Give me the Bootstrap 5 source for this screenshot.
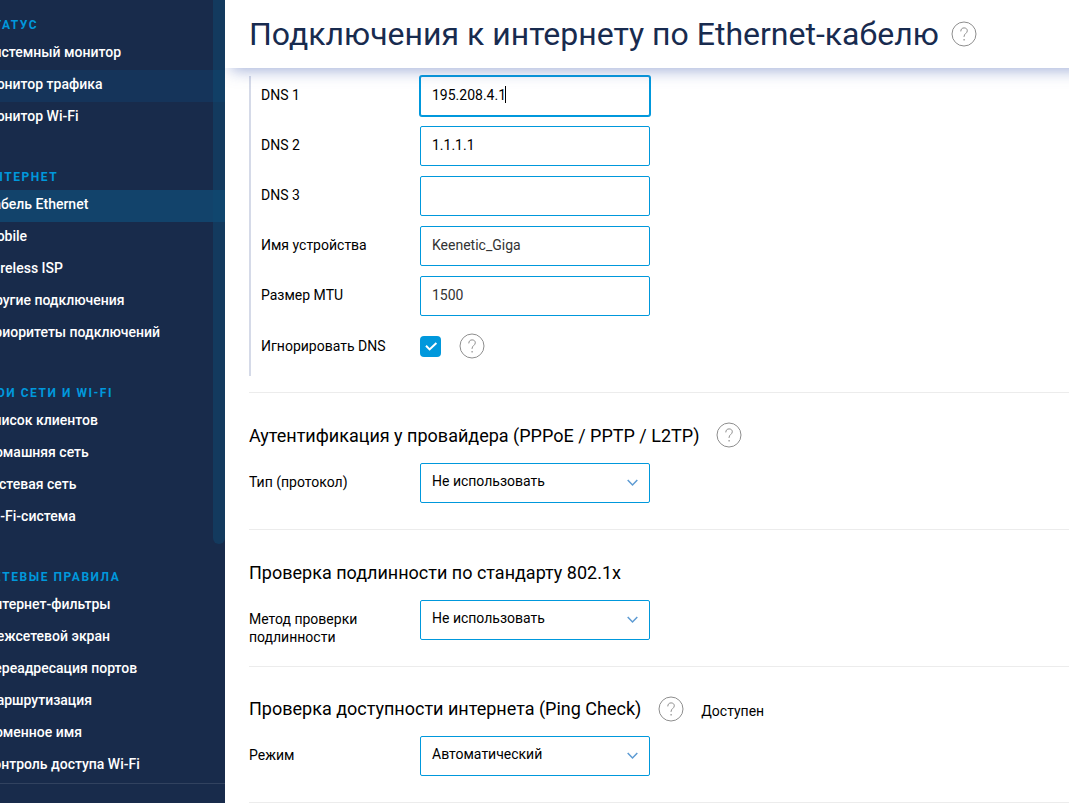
<!DOCTYPE html>
<html lang="ru">
<head>
<meta charset="utf-8">
<meta name="viewport" content="width=device-width, initial-scale=1">
<title>Подключения к интернету по Ethernet-кабелю</title>
<link href="https://cdn.jsdelivr.net/npm/bootstrap@5.3.0/dist/css/bootstrap.min.css" rel="stylesheet">
<style>
  body { font-family: Roboto, "Liberation Sans", sans-serif; font-size: 14px; line-height: 18px; color: #000; background: #fff; }
  .shell { height: 803px; }

  /* sidebar */
  .side { width: 225px; background: #182b4b; }
  .side-menu { width: 240.6px; margin-left: -15.6px; }
  .side-title { height: 56px; padding-top: 35px; line-height: 16px; font-size: 12px; font-weight: 700; letter-spacing: 1.54px; color: #0098dc; }
  .side-group:first-child .side-title { height: 38px; padding-top: 17px; }
  .side .nav-link { height: 32px; padding: 5px 0 0; line-height: 18px; font-weight: 500; color: #fff; white-space: nowrap; }
  .side .nav-link.hovered { background: #15345a; }
  .side .nav-link.active { background: #12436b; }
  .side-rule { height: 1px; background: #31425f; margin-top: 1px; }
  .side-scroll { top: 0; right: 0; width: 12px; height: 544px; border-radius: 0 0 6px 6px; background: rgba(14, 74, 114, .5); }

  /* page header */
  .page-head { height: 68px; padding-left: 24px; gap: 12px; background: #fff; z-index: 2; flex: none; }
  .page-head::after { content: ""; position: absolute; z-index: -1; left: 8px; right: -20px; top: 30px; bottom: 0; box-shadow: 0 0 16px 2px rgba(80, 105, 180, .55); clip-path: inset(38px -30px -30px -8px); }
  .page-head h1 { font-size: 32px; line-height: 40px; font-weight: 400; color: #182b4f; margin: 0; white-space: nowrap; }

  /* form */
  .form-area { padding-left: 24px; }
  .fieldset-box { border-left: 2px solid #d5dae8; padding-left: 10px; height: 300px; margin-top: 8px; }
  .form-line { height: 40px; margin-bottom: 10px; }
  .fieldset-box .form-line > label { width: 159px; padding-bottom: 2px; }
  .section-line > label { width: 171px; padding-bottom: 2px; }
  .field { width: 230px; height: 40px; padding: 0 11px 3px; border: 1px solid #0098dc; border-radius: 2px; font-size: 14px; color: #000; background: #fff; }
  .field.choice { padding: 0 11px 5px 11px; }
  .field.soft { color: #333; }
  .field.focused { box-shadow: 0 0 0 1px #0098dc; }
  .caret { width: 1px; height: 17px; background: #000; margin-left: -1px; }
  .field-chevron { width: 11px; height: 8px; margin: 5px 0 0; }
  .tick-box { width: 21px; height: 21px; border-radius: 4px; background: #0098dc; }
  .section { border-top: 1px solid #ececec; height: 137px; }
  .section-head { height: 26px; margin-top: 30px; margin-bottom: 14px; gap: 17px; }
  .section.ping { height: 136px; }
  .section.ping .section-head { margin-top: 29px; }
  .two-line { padding-top: 10px; }
  .section-head h2 { font-size: 18px; line-height: 26px; font-weight: 400; margin: 0; white-space: nowrap; }
  .help { width: 26px; height: 26px; flex: none; }
  .tick-help { margin-left: 18px; }
  .raised { margin-bottom: 2px; }
</style>
</head>
<body class="overflow-hidden">
<div class="shell d-flex overflow-hidden">
  <aside class="side position-relative overflow-hidden flex-shrink-0">
    <nav class="side-menu">
      <div class="side-group">
        <div class="side-title">СТАТУС</div>
        <div class="nav flex-column">
          <a class="nav-link" href="#">Системный монитор</a>
          <a class="nav-link hovered" href="#">Монитор трафика</a>
          <a class="nav-link" href="#">Монитор Wi-Fi</a>
        </div>
      </div>
      <div class="side-group">
        <div class="side-title">ИНТЕРНЕТ</div>
        <div class="nav flex-column">
          <a class="nav-link active" href="#">Кабель Ethernet</a>
          <a class="nav-link" href="#">Mobile</a>
          <a class="nav-link" href="#">Wireless ISP</a>
          <a class="nav-link" href="#">Другие подключения</a>
          <a class="nav-link" href="#">Приоритеты подключений</a>
        </div>
      </div>
      <div class="side-group">
        <div class="side-title">МОИ СЕТИ И WI-FI</div>
        <div class="nav flex-column">
          <a class="nav-link" href="#">Список клиентов</a>
          <a class="nav-link" href="#">Домашняя сеть</a>
          <a class="nav-link" href="#">Гостевая сеть</a>
          <a class="nav-link" href="#">Wi-Fi-система</a>
        </div>
      </div>
      <div class="side-group">
        <div class="side-title">СЕТЕВЫЕ ПРАВИЛА</div>
        <div class="nav flex-column">
          <a class="nav-link" href="#">Интернет-фильтры</a>
          <a class="nav-link" href="#">Межсетевой экран</a>
          <a class="nav-link" href="#">Переадресация портов</a>
          <a class="nav-link" href="#">Маршрутизация</a>
          <a class="nav-link" href="#">Доменное имя</a>
          <a class="nav-link" href="#">Контроль доступа Wi-Fi</a>
        </div>
      </div>
      <div class="side-rule"></div>
    </nav>
    <div class="side-scroll position-absolute"></div>
  </aside>

  <main class="flex-grow-1 d-flex flex-column overflow-hidden">
    <header class="page-head position-relative d-flex align-items-center">
      <h1>Подключения к интернету по Ethernet-кабелю</h1>
      <svg class="help" viewBox="0 0 26 26" fill="none" stroke="#8e8e8e"><circle cx="13" cy="13" r="12"/><path d="M9.8 10.4c0-2.2 1.3-3.5 3.3-3.5s3.2 1.2 3.2 2.9c0 2.5-3.2 2.8-3.2 5.6v.6"/><path d="M13.1 18v1.5" stroke-width="1.2"/></svg>
    </header>

    <div class="form-area">
      <div class="fieldset-box">
        <div class="form-line d-flex align-items-center"><label>DNS 1</label><div class="field focused d-flex align-items-center">195.208.4.1<span class="caret"></span></div></div>
        <div class="form-line d-flex align-items-center"><label>DNS 2</label><div class="field d-flex align-items-center">1.1.1.1</div></div>
        <div class="form-line d-flex align-items-center"><label>DNS 3</label><div class="field"></div></div>
        <div class="form-line d-flex align-items-center"><label>Имя устройства</label><div class="field soft d-flex align-items-center">Keenetic_Giga</div></div>
        <div class="form-line d-flex align-items-center"><label>Размер MTU</label><div class="field soft d-flex align-items-center">1500</div></div>
        <div class="form-line d-flex align-items-center"><label class="pb-0">Игнорировать DNS</label>
          <span class="tick-box d-flex"><svg width="21" height="21" viewBox="0 0 21 21" fill="none" stroke="#fff" stroke-width="2"><path d="M6 9.8l3.6 3.6 6.8-6.4"/></svg></span>
          <svg class="help tick-help" viewBox="0 0 26 26" fill="none" stroke="#8e8e8e"><circle cx="13" cy="13" r="12"/><path d="M9.8 10.4c0-2.2 1.3-3.5 3.3-3.5s3.2 1.2 3.2 2.9c0 2.5-3.2 2.8-3.2 5.6v.6"/><path d="M13.1 18v1.5" stroke-width="1.2"/></svg>
        </div>
      </div>

      <section class="section mt-3">
        <div class="section-head d-flex align-items-center">
          <h2>Аутентификация у провайдера (PPPoE / PPTP / L2TP)</h2>
          <svg class="help raised" viewBox="0 0 26 26" fill="none" stroke="#8e8e8e"><circle cx="13" cy="13" r="12"/><path d="M9.8 10.4c0-2.2 1.3-3.5 3.3-3.5s3.2 1.2 3.2 2.9c0 2.5-3.2 2.8-3.2 5.6v.6"/><path d="M13.1 18v1.5" stroke-width="1.2"/></svg>
        </div>
        <div class="section-line d-flex align-items-center"><label>Тип (протокол)</label>
          <div class="field choice d-flex align-items-center justify-content-between">Не использовать<svg class="field-chevron" viewBox="0 0 11 8" fill="none" stroke="#5d9bd3" stroke-width="1.5"><path d="M.7 1l4.8 5L10.3 1"/></svg></div></div>
      </section>

      <section class="section">
        <div class="section-head d-flex align-items-center">
          <h2>Проверка подлинности по стандарту 802.1x</h2>
        </div>
        <div class="section-line d-flex"><label class="two-line">Метод проверки<br>подлинности</label>
          <div class="field choice d-flex align-items-center justify-content-between">Не использовать<svg class="field-chevron" viewBox="0 0 11 8" fill="none" stroke="#5d9bd3" stroke-width="1.5"><path d="M.7 1l4.8 5L10.3 1"/></svg></div></div>
      </section>

      <section class="section ping">
        <div class="section-head d-flex align-items-center">
          <h2>Проверка доступности интернета (Ping Check)</h2>
          <svg class="help" viewBox="0 0 26 26" fill="none" stroke="#8e8e8e"><circle cx="13" cy="13" r="12"/><path d="M9.8 10.4c0-2.2 1.3-3.5 3.3-3.5s3.2 1.2 3.2 2.9c0 2.5-3.2 2.8-3.2 5.6v.6"/><path d="M13.1 18v1.5" stroke-width="1.2"/></svg>
          <span class="pt-1">Доступен</span>
        </div>
        <div class="section-line d-flex align-items-center"><label>Режим</label>
          <div class="field choice d-flex align-items-center justify-content-between">Автоматический<svg class="field-chevron" viewBox="0 0 11 8" fill="none" stroke="#5d9bd3" stroke-width="1.5"><path d="M.7 1l4.8 5L10.3 1"/></svg></div></div>
      </section>
      <div class="section"></div>
    </div>
  </main>
</div>
<script src="https://cdn.jsdelivr.net/npm/bootstrap@5.3.0/dist/js/bootstrap.bundle.min.js"></script>
</body>
</html>
